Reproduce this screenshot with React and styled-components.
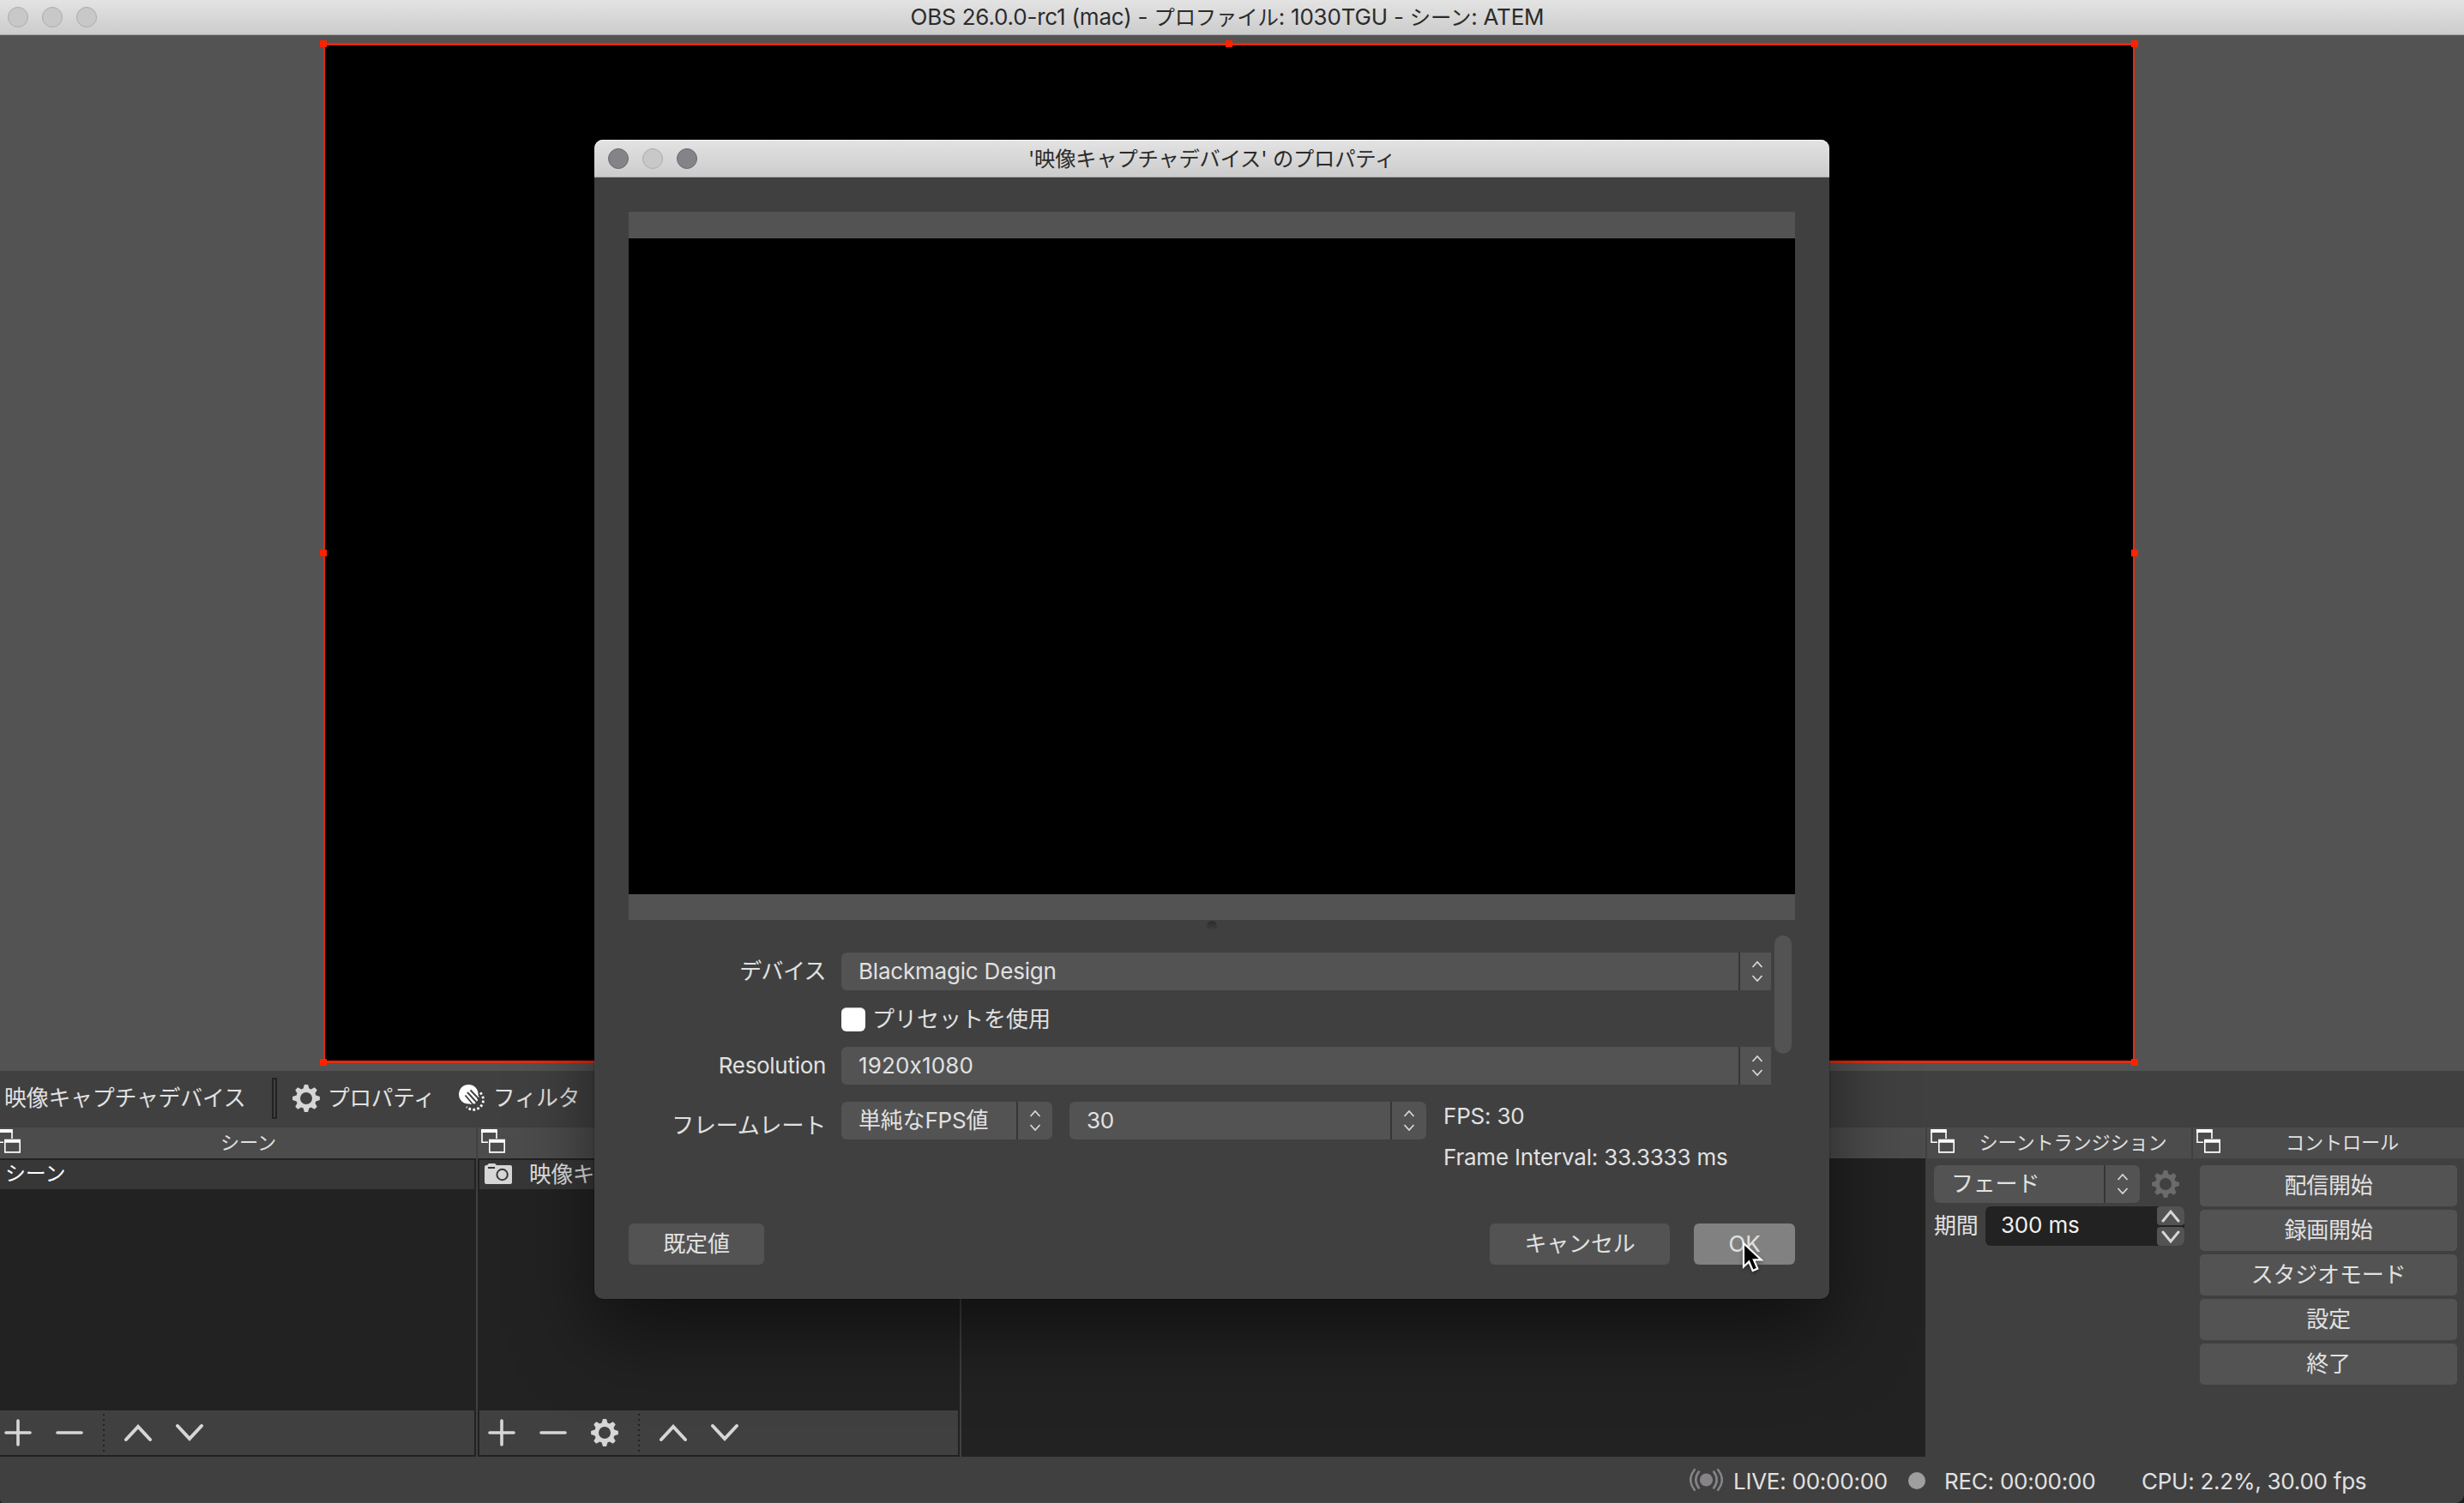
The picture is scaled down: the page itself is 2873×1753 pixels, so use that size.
import styled, { createGlobalStyle } from "styled-components";

const controles = ["配信開始", "録画開始", "スタジオモード", "設定", "終了"];

// 8 teeth around a 32x32 box
function gearPath() {
    let d = "";
    for (let i = 0; i < 8; i++) {
        const a = (i * Math.PI) / 4;
        const p = (r, off) => {
            const x = 16 + r * Math.sin(a) + off * Math.cos(a);
            const y = 16 - r * Math.cos(a) + off * Math.sin(a);
            return `${x.toFixed(2)} ${y.toFixed(2)}`;
        };
        d += `${i === 0 ? "M" : "L"}${p(11.4, -3.4)}L${p(15.9, -2.1)}L${p(15.9, 2.1)}L${p(11.4, 3.4)}`;
    }
    return d + "Z M16 9a7 7 0 1 0 0 14a7 7 0 1 0 0-14Z";
}

function Gear({ color = "#d6d6d6" }) {
    return (
        <Icon width="32" height="32" viewBox="0 0 32 32">
            <path d={gearPath()} fill={color} fillRule="evenodd" />
        </Icon>
    );
}

// solid disc whose lower right is cut into stripes, with a dotted arc behind it
function FilterIcon() {
    return (
        <Icon width="32" height="32" viewBox="0 0 32 32">
            <path d="M25 9.500A11 11 0 1 1 9 26" fill="none" stroke="#fff" strokeWidth="2.800" strokeDasharray="2.700 2.300" />
            <circle cx="11.300" cy="11.300" r="11.300" fill="#fff" />
            <path d="M8 15l6 6.500M10 12l8 9M13 10l7.500 8M15 7l7 7.500" stroke="#fff" strokeWidth="3" strokeLinecap="round" />
            <path d="M7.500 12.500l8 9.500M10 9l10 11M13.500 6.500l10 10.500" stroke="#404040" strokeWidth="1.900" />
        </Icon>
    );
}

function Windows() {
    return (
        <Icon width="28" height="28" viewBox="0 0 28 28">
            <path d="M1 2v13.200h7M18 2v9" fill="none" stroke="#fff" strokeWidth="1.600" />
            <path d="M0 0h18.800v4H0zM9 11.800h19v4h-19z" fill="#fff" />
            <path d="M9.800 13v13.900h17.400V13" fill="none" stroke="#fff" strokeWidth="1.600" />
        </Icon>
    );
}

function Camera() {
    return (
        <Icon width="32" height="24" viewBox="0 0 32 24">
            <path d="M3 2l2-2h7l2 2h16a2 2 0 0 1 2 2v18a2 2 0 0 1-2 2H2a2 2 0 0 1-2-2V4a2 2 0 0 1 2-2Z" fill="#d6d6d6" />
            <path d="M4 5h8" stroke="#373737" strokeWidth="2" />
            <circle cx="20.6" cy="13" r="6.2" fill="none" stroke="#373737" strokeWidth="2" />
        </Icon>
    );
}

function Live() {
    return (
        <Icon width="39" height="28" viewBox="0 0 39 28">
            <circle cx="19.5" cy="14" r="7.6" fill="#868488" />
            <g fill="none" stroke="#868488" strokeWidth="2.6" strokeLinecap="round">
                <path d="M10.800 4.500q-7 9.500 0 19M5.800 2.200q-9.200 11.800 0 23.600M28.200 4.500q7 9.500 0 19M33.200 2.200q9.200 11.800 0 23.600" />
            </g>
        </Icon>
    );
}

const glyphs = {
    plus: "M16 2v28M2 16h28",
    minus: "M2 16h28",
    up: "M2 24l14-15l14 15",
    down: "M2 8l14 15l14-15",
};

function Glyph({ name }) {
    return (
        <Icon width="32" height="32" viewBox="0 0 32 32">
            <path d={glyphs[name]} fill="none" stroke="#d6d6d6" strokeWidth={name === "plus" || name === "minus" ? 3.6 : 4} strokeLinecap="round" />
        </Icon>
    );
}

function Arrows() {
    return (
        <Icon width="14" height="24" viewBox="0 0 14 24">
            <path d="M1.500 7l5.500-6l5.500 6M1.500 17l5.500 6l5.500-6" fill="none" stroke="#d6d6d6" strokeWidth="1.8" />
        </Icon>
    );
}

function Combo({ text, width, arrow, square, spacing = -0.2 }) {
    return (
        <ComboBox $width={width} $square={square}>
            <ComboText $spacing={spacing}>{text}</ComboText>
            <ComboArrow $width={arrow} $pad={square ? 4 : 0}><Arrows /></ComboArrow>
        </ComboBox>
    );
}

function DockHeader({ title, left = 4 }) {
    return (
        <Header $left={left}>
            <Windows />
            <HeaderTitle>{title}</HeaderTitle>
        </Header>
    );
}

export default function App() {
    return (
        <>
            <GlobalStyle />
            <Window>
                <TitleBar $height={41} $left={9}>
                    <Dot /><Dot /><Dot />
                    <Title $size={26} $jp={24.4} $right={131} $top={0}>
                        OBS 26.0.0-rc1 (mac) - <span>プロファイル</span>: 1030TGU - <span>シーン</span>: ATEM
                    </Title>
                </TitleBar>
                <Preview>
                    <Canvas>
                        {[0, 1, 2].map((c) => [0, 1, 2].map((r) => (
                            c === 1 && r === 1 ? null : <Handle key={`${c}${r}`} $col={c} $row={r} />
                        )))}
                    </Canvas>
                </Preview>
                <ContextBar>
                    <SourceName>映像キャプチャデバイス</SourceName>
                    <BarSeparator />
                    <Tool $gap={9} $width={194}><Gear />プロパティ</Tool>
                    <Tool $gap={8}><FilterIcon />フィルタ</Tool>
                </ContextBar>
                <Docks>
                    <Dock $width={555}>
                        <DockHeader title="シーン" left={-4} />
                        <ListBox $first>
                            <SceneRow>シーン</SceneRow>
                            <ListSpace />
                            <ListTools $left={5}>
                                <Glyph name="plus" />
                                <Glyph name="minus" />
                                <Dots />
                                <Glyph name="up" />
                                <Glyph name="down" />
                            </ListTools>
                        </ListBox>
                    </Dock>
                    <Dock $width={562}>
                        <DockHeader />
                        <ListBox>
                            <SourceRow><Camera />映像キ</SourceRow>
                            <ListSpace />
                            <ListTools $left={10}>
                                <Glyph name="plus" />
                                <Glyph name="minus" />
                                <Gear />
                                <Dots />
                                <Glyph name="up" />
                                <Glyph name="down" />
                            </ListTools>
                        </ListBox>
                    </Dock>
                    <Dock $width={1124}>
                        <DockHeader />
                        <ListBox />
                    </Dock>
                    <Dock $width={308}>
                        <DockHeader title="シーントランジション" />
                        <Transition>
                            <TransitionRow>
                                <Combo text="フェード" width={240} arrow={40} />
                                <Gear color="#6b6b6b" />
                            </TransitionRow>
                            <Duration>
                                <DurationLabel>期間</DurationLabel>
                                <Spin>
                                    <SpinValue>300 ms</SpinValue>
                                    <SpinButtons>
                                        <SpinButton><SmallChevron d="M2 14L11 3l9 11" /></SpinButton>
                                        <SpinButton><SmallChevron d="M2 3l9 11l9-11" /></SpinButton>
                                    </SpinButtons>
                                </Spin>
                            </Duration>
                        </Transition>
                    </Dock>
                    <Dock $width={316}>
                        <DockHeader title="コントロール" />
                        <Controls>
                            {controles.map((nome) => (
                                <ControlButton key={nome}>{nome}</ControlButton>
                            ))}
                        </Controls>
                    </Dock>
                </Docks>
                <StatusBar>
                    <Live />
                    <Status $width={179} $ml={12}>LIVE: 00:00:00</Status>
                    <RecDot />
                    <Status $width={176} $ml={22}>REC: 00:00:00</Status>
                    <Status $width={258} $ml={54}>CPU: 2.2%, 30.00 fps</Status>
                </StatusBar>
            </Window>

            <Dialog>
                <TitleBar $height={44} $left={16} $round>
                    <Dot $dark /><Dot /><Dot $dark />
                    <Title $size={24.3} $jp={24.3} $right={120} $top={1}>'映像キャプチャデバイス' のプロパティ</Title>
                </TitleBar>
                <DialogBody>
                    <DevicePreview><Black /></DevicePreview>
                    <Splitter><SplitDot /></Splitter>
                    <FormArea>
                        <Form>
                            <Row $h={44}>
                                <Label $spacing={-0.6}>デバイス</Label>
                                <Combo text="Blackmagic Design" width={1084} arrow={36} square />
                            </Row>
                            <Row $h={28} $mt={20}>
                                <Label />
                                <Check />
                                <CheckText>プリセットを使用</CheckText>
                            </Row>
                            <Row $h={44} $mt={18}>
                                <Label $spacing={-0.3}>Resolution</Label>
                                <Combo text="1920x1080" width={1084} arrow={36} square spacing={0.15} />
                            </Row>
                            <Row $h={84} $mt={20} $top>
                                <Label $pt={12} $spacing={-0.2}>フレームレート</Label>
                                <Combo text="単純なFPS値" width={246} arrow={40} />
                                <Gap />
                                <Combo text="30" width={416} arrow={40} />
                                <Info>
                                    <span>FPS: 30</span>
                                    <span>Frame Interval: 33.3333 ms</span>
                                </Info>
                            </Row>
                        </Form>
                        <ScrollBar />
                    </FormArea>
                    <Buttons>
                        <Button $width={158}>既定値</Button>
                        <Spacer />
                        <Button $width={210}>キャンセル</Button>
                        <Button $width={118} $ok>OK</Button>
                    </Buttons>
                </DialogBody>
            </Dialog>

            <Cursor width="30" height="44" viewBox="0 0 30 44">
                <path d="M4 3v27.500l6.300-6l4.400 10.500l5.600-2.400l-4.400-10.200h8.800Z" fill="#000" stroke="#fff" strokeWidth="2.200" />
            </Cursor>
        </>
    );
}

function SmallChevron({ d }) {
    return (
        <Icon width="22" height="17" viewBox="0 0 22 17">
            <path d={d} fill="none" stroke="#d6d6d6" strokeWidth="3" strokeLinecap="round" />
        </Icon>
    );
}

const GlobalStyle = createGlobalStyle`
* {
    box-sizing: border-box;
}
body {
    margin: 0;
    background: #1c1c1c;
    overflow: hidden;
    font-family: Inter, "Noto Sans CJK JP", sans-serif;
    font-size: 26px;
    line-height: 32px;
    letter-spacing: -0.2px;
    color: #e1e1e1;
}
`
const Icon = styled.svg`
display: block;
flex: none;
`
const Window = styled.div`
width: 2873px;
height: 1753px;
display: flex;
flex-direction: column;
background: #404040;
border-radius: 0 0 10px 4px;
overflow: hidden;
white-space: nowrap;
`
const TitleBar = styled.div`
flex: none;
height: ${(props) => props.$height}px;
display: flex;
align-items: center;
gap: 16px;
padding: 0 ${(props) => props.$left}px;
background: linear-gradient(#e3e3e3, #cccccc);
border-bottom: 1px solid #acacac;
border-radius: ${(props) => props.$round ? "10px 10px 0 0" : "0"};
${(props) => props.$round && "box-shadow: inset 0 1px 0 #f4f4f4;"}
`
const Dot = styled.div`
width: 24px;
height: 24px;
border-radius: 50%;
background: ${(props) => props.$dark ? "#848388" : "#c8c8c8"};
border: 1px solid ${(props) => props.$dark ? "#6a696d" : "#acacac"};
`
const Title = styled.div`
flex: 1;
/* keeps the title centred against the three dots */
margin-right: ${(props) => props.$right}px;
padding-top: ${(props) => props.$top}px;
text-align: center;
color: #2b2b2b;
font-size: ${(props) => props.$size}px;
span {
    font-size: ${(props) => props.$jp}px;
}
`
const Preview = styled.div`
flex: none;
height: 1208px;
padding: 9px 0 0 377px;
background: #535353;
`
const Canvas = styled.div`
position: relative;
width: 2112px;
height: 1190px;
background: #000;
border: 2px solid #e5290d;
border-width: 3px 2px;
`
const Handle = styled.div`
position: absolute;
width: 8px;
height: 8px;
background: #ff2200;
left: calc(${(props) => props.$col * 50}% + ${(props) => (props.$col - 1) * 2 - 4}px);
top: calc(${(props) => props.$row * 50}% + ${(props) => (props.$row - 1) * 2 - 4}px);
`
const ContextBar = styled.div`
flex: none;
height: 66px;
display: flex;
align-items: center;
padding: 0 0 2px 5px;
`
const SourceName = styled.div`
width: 312px;
font-size: 25.9px;
`
const BarSeparator = styled.div`
width: 6px;
height: 48px;
border: 2px solid #222222;
margin-right: 18px;
`
const Tool = styled.div`
display: flex;
align-items: center;
gap: ${(props) => props.$gap}px;
width: ${(props) => props.$width ? props.$width + "px" : "auto"};
font-size: 25.6px;
`
const Docks = styled.div`
flex: none;
height: 384px;
display: flex;
gap: 2px;
`
const Dock = styled.div`
flex: none;
width: ${(props) => props.$width}px;
display: flex;
flex-direction: column;
overflow: hidden;
`
const Header = styled.div`
flex: none;
height: 36px;
display: flex;
align-items: center;
background: #4c4c4c;
svg {
    margin-left: ${(props) => props.$left}px;
    margin-bottom: 4px;
}
`
const HeaderTitle = styled.div`
flex: 1;
text-align: center;
font-size: 22.2px;
`
const ListBox = styled.div`
flex: 1;
display: flex;
flex-direction: column;
background: #222222;
border: 2px solid #222222;
border-left-width: ${(props) => props.$first ? 0 : 2}px;
`
const SceneRow = styled.div`
height: 34px;
background: #373737;
padding-left: 6px;
font-size: 24px;
color: #fff;
`
const SourceRow = styled.div`
height: 34px;
display: flex;
align-items: center;
gap: 20px;
padding-left: 6px;
background: #373737;
font-size: 25.6px;
svg {
    margin-bottom: 2px;
}
`
const ListSpace = styled.div`
flex: 1;
`
const ListTools = styled.div`
height: 52px;
display: flex;
align-items: center;
gap: 28px;
padding-left: ${(props) => props.$left}px;
background: #404040;
`
const Dots = styled.div`
width: 2px;
height: 44px;
margin: 0 -5px 0 -5px;
background: repeating-linear-gradient(#222222 0 2px, transparent 2px 6px);
`
const ComboBox = styled.div`
flex: none;
display: flex;
gap: 2px;
width: ${(props) => props.$width}px;
height: 44px;
border-radius: ${(props) => props.$square ? "6px 0 0 6px" : "6px"};
background: #363636;
overflow: hidden;
`
const ComboText = styled.div`
flex: 1;
display: flex;
align-items: center;
padding-left: 20px;
background: #535353;
letter-spacing: ${(props) => props.$spacing}px;
/* no contextual swap of the x between digits */
font-feature-settings: "calt" 0;
`
const ComboArrow = styled.div`
width: ${(props) => props.$width}px;
padding-left: ${(props) => props.$pad}px;
display: flex;
align-items: center;
justify-content: center;
background: #535353;
`
const Transition = styled.div`
padding: 8px 8px 0 8px;
`
const TransitionRow = styled.div`
display: flex;
align-items: center;
gap: 14px;
`
const Duration = styled.div`
display: flex;
align-items: center;
margin-top: 4px;
`
const DurationLabel = styled.div`
width: 60px;
`
const Spin = styled.div`
width: 232px;
height: 46px;
display: flex;
justify-content: space-between;
background: #222222;
border-radius: 6px;
overflow: hidden;
`
const SpinValue = styled.div`
padding: 6px 0 0 18px;
color: #f0f0f0;
`
const SpinButtons = styled.div`
display: flex;
flex-direction: column;
gap: 2px;
`
const SpinButton = styled.div`
flex: 1;
width: 32px;
display: flex;
align-items: center;
justify-content: center;
background: #535353;
border-radius: 4px;
`
const Controls = styled.div`
display: flex;
flex-direction: column;
gap: 4px;
padding: 8px;
`
const ControlButton = styled.div`
height: 48px;
display: flex;
align-items: center;
justify-content: center;
background: #535353;
border-radius: 5px;
`
const StatusBar = styled.div`
flex: 1;
display: flex;
align-items: flex-start;
padding: 13px 0 0 1970px;
border-bottom: 1px solid #4a4646;
`
const Status = styled.div`
width: ${(props) => props.$width}px;
margin-left: ${(props) => props.$ml}px;
letter-spacing: -0.25px;
`
const RecDot = styled.div`
width: 20px;
height: 20px;
margin: 5px 0 0 25px;
border-radius: 50%;
background: #9f9f9f;
`
const Dialog = styled.div`
position: absolute;
left: 693px;
top: 163px;
width: 1440px;
height: 1352px;
display: flex;
flex-direction: column;
background: #404040;
border-radius: 10px;
box-shadow: 0 0 2px rgba(0, 0, 0, 0.6), 0 40px 90px rgba(0, 0, 0, 0.5);
white-space: nowrap;
`
const DialogBody = styled.div`
flex: 1;
display: flex;
flex-direction: column;
padding: 40px 40px 40px 40px;
`
const DevicePreview = styled.div`
height: 826px;
padding: 31px 0 30px;
background: #535353;
`
const Black = styled.div`
height: 765px;
background: #000;
`
const Splitter = styled.div`
height: 18px;
display: flex;
justify-content: center;
`
const SplitDot = styled.div`
width: 12px;
height: 12px;
margin-top: 1px;
border-radius: 50%;
background: linear-gradient(#2c2c2c, #404040);
`
const FormArea = styled.div`
height: 336px;
display: flex;
gap: 4px;
`
const Form = styled.div`
width: 1332px;
padding-top: 20px;
`
const Row = styled.div`
display: flex;
align-items: ${(props) => props.$top ? "flex-start" : "center"};
height: ${(props) => props.$h}px;
margin-top: ${(props) => props.$mt || 0}px;
`
const Label = styled.div`
width: 230px;
margin-right: 18px;
padding-top: ${(props) => props.$pt || 0}px;
text-align: right;
letter-spacing: ${(props) => props.$spacing || 0}px;
`
const Check = styled.div`
width: 28px;
height: 28px;
border-radius: 6px;
background: #fff;
border-top: 1px solid #c4c4c4;
`
const CheckText = styled.div`
margin-left: 8px;
letter-spacing: 0;
`
const Gap = styled.div`
width: 20px;
`
const Info = styled.div`
display: flex;
flex-direction: column;
gap: 16px;
margin-left: 20px;
padding-top: 1px;
`
const ScrollBar = styled.div`
width: 20px;
height: 138px;
border-radius: 10px;
background: #535353;
`
const Buttons = styled.div`
display: flex;
gap: 28px;
`
const Button = styled.div`
width: ${(props) => props.$width}px;
height: 48px;
display: flex;
align-items: center;
justify-content: center;
border-radius: 6px;
background: ${(props) => props.$ok ? "#818181" : "#535353"};
`
const Spacer = styled.div`
flex: 1;
`
const Cursor = styled.svg`
position: absolute;
left: 2029px;
top: 1447px;
filter: drop-shadow(0 2px 2px rgba(0, 0, 0, 0.4));
`
